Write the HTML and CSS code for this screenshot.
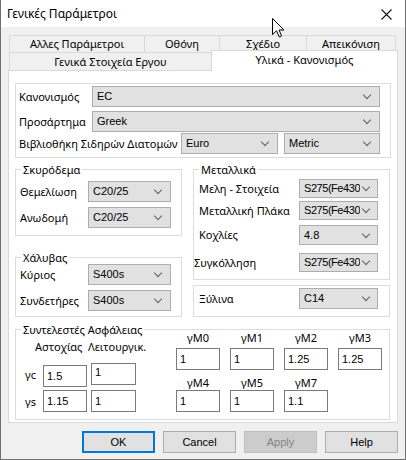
FILE: index.html
```html
<!DOCTYPE html>
<html lang="el">
<head>
<meta charset="utf-8">
<title>Γενικές Παράμετροι</title>
<link rel="stylesheet" href="styles.css">
</head>
<body>
<div class="window">
  <div class="titlebar">
    <span class="title">Γενικές Παράμετροι</span>
    <svg class="close" width="11" height="11" viewBox="0 0 11 11"><path d="M0.5 0.5L10.5 10.5M10.5 0.5L0.5 10.5" stroke="#111" stroke-width="1.1" fill="none"/></svg>
  </div>
  <div class="body">
    <div class="tabs">
      <div class="tabrow back">
        <div class="tab t1">Αλλες Παράμετροι</div>
        <div class="tab t2">Οθόνη</div>
        <div class="tab t3">Σχέδιο</div>
        <div class="tab t4">Απεικόνιση</div>
      </div>
      <div class="tabrow front">
        <div class="tab t5">Γενικά Στοιχεία Εργου</div>
        <div class="tab sel">Υλικά - Κανονισμός</div>
      </div>
    </div>
    <div class="panel">
      <div class="group g-code">
        <div class="row">
          <span class="lbl lw-code">Κανονισμός</span>
          <div class="combo cw-wide"><span class="val">EC</span><span class="chev"></span></div>
        </div>
        <div class="row mt4">
          <span class="lbl lw-code">Προσάρτημα</span>
          <div class="combo cw-wide"><span class="val">Greek</span><span class="chev"></span></div>
        </div>
        <div class="row mt1">
          <span class="lbl lw-lib">Βιβλιοθήκη Σιδηρών Διατομών</span>
          <div class="combo cw-euro"><span class="val">Euro</span><span class="chev"></span></div>
          <div class="combo cw-metric"><span class="val">Metric</span><span class="chev"></span></div>
        </div>
      </div>

      <div class="cols">
        <div class="col col-left">
          <div class="group g-conc">
            <div class="legend lg-left">Σκυρόδεμα</div>
            <div class="row mt5">
              <span class="lbl lw-left">Θεμελίωση</span>
              <div class="combo cw-small"><span class="val">C20/25</span><span class="chev"></span></div>
            </div>
            <div class="row mt5">
              <span class="lbl lw-left">Ανωδομή</span>
              <div class="combo cw-small"><span class="val">C20/25</span><span class="chev"></span></div>
            </div>
          </div>
          <div class="group g-steel">
            <div class="legend lg-left">Χάλυβας</div>
            <div class="row">
              <span class="lbl lw-left">Κύριος</span>
              <div class="combo cw-small"><span class="val">S400s</span><span class="chev"></span></div>
            </div>
            <div class="row mt5">
              <span class="lbl lw-left">Συνδετήρες</span>
              <div class="combo cw-small"><span class="val">S400s</span><span class="chev"></span></div>
            </div>
          </div>
        </div>
        <div class="col col-right">
          <div class="group g-metal">
            <div class="legend lg-right">Μεταλλικά</div>
            <div class="row h19 mt3">
              <span class="lbl lw-right">Μελη - Στοιχεία</span>
              <div class="combo cw-right"><span class="val narrow">S275(Fe430)</span><span class="chev"></span></div>
            </div>
            <div class="row h19 mt3">
              <span class="lbl lw-right">Μεταλλική Πλάκα</span>
              <div class="combo cw-right"><span class="val narrow">S275(Fe430)</span><span class="chev"></span></div>
            </div>
            <div class="row h20 mt5">
              <span class="lbl lw-right">Κοχλίες</span>
              <div class="combo cw-right"><span class="val">4.8</span><span class="chev"></span></div>
            </div>
            <div class="row h19 mt8">
              <span class="lbl lw-right shift-left">Συγκόλληση</span>
              <div class="combo cw-right"><span class="val narrow">S275(Fe430)</span><span class="chev"></span></div>
            </div>
          </div>
          <div class="group g-wood">
            <div class="row">
              <span class="lbl lw-right">Ξύλινα</span>
              <div class="combo cw-right"><span class="val">C14</span><span class="chev"></span></div>
            </div>
          </div>
        </div>
      </div>

      <div class="group g-safety">
        <div class="legend lg-safety">Συντελεστές Ασφάλειας</div>
        <div class="safety">
          <div class="sf-left">
            <div class="hdr">
              <span class="h-ult">Αστοχίας</span>
              <span class="h-serv">Λειτουργικ.</span>
            </div>
            <div class="sf-row mt10">
              <span class="g-lbl">γc</span>
              <div class="edit e-c1 low">1.5</div>
              <div class="edit e-c2 top">1</div>
            </div>
            <div class="sf-row mt5">
              <span class="g-lbl">γs</span>
              <div class="edit e-c1">1.15</div>
              <div class="edit e-c2">1</div>
            </div>
          </div>
          <div class="sf-right">
            <div class="mrow mrow1">
              <div class="mcell"><span class="m-lbl">γM0</span><div class="edit">1</div></div>
              <div class="mcell"><span class="m-lbl">γM1</span><div class="edit">1</div></div>
              <div class="mcell"><span class="m-lbl">γM2</span><div class="edit">1.25</div></div>
              <div class="mcell"><span class="m-lbl">γM3</span><div class="edit">1.25</div></div>
            </div>
            <div class="mrow mrow2">
              <div class="mcell"><span class="m-lbl">γM4</span><div class="edit">1</div></div>
              <div class="mcell"><span class="m-lbl">γM5</span><div class="edit">1</div></div>
              <div class="mcell"><span class="m-lbl">γM7</span><div class="edit">1.1</div></div>
            </div>
          </div>
        </div>
      </div>
    </div>

    <div class="buttons">
      <button class="btn default">OK</button>
      <button class="btn">Cancel</button>
      <button class="btn disabled">Apply</button>
      <button class="btn">Help</button>
    </div>
  </div>
  <svg class="cursor" width="14" height="20" viewBox="0 0 14 20"><path d="M0.5 0.5 V16.5 L4.5 12.8 L7.3 19 L9.6 18 L7 12 H12 Z" fill="#fff" stroke="#000" stroke-width="1" stroke-linejoin="miter"/></svg>
</div>
</body>
</html>
```
FILE: styles.css
```css
html, body {
  margin: 0;
  padding: 0;
  background: #f0f0f0;
}

.window {
  position: relative;
  width: 406px;
  height: 460px;
  box-sizing: border-box;
  border: 1px solid #707070;
  border-top: none;
  background: #f0f0f0;
  font-family: "Noto Sans", sans-serif;
  font-size: 11px;
  color: #000;
  overflow: hidden;
}

/* title bar */
.titlebar {
  height: 27px;
  background: #fff;
  display: flex;
  align-items: center;
  justify-content: space-between;
  padding: 0 13px 0 6px;
}
.title {
  font-size: 12px;
  line-height: 14px;
}
.close {
  display: block;
  margin-top: 1px;
}

.body {
  padding: 8px 7px 0 7px;
}

/* tabs */
.tabrow {
  display: flex;
  margin-left: 1px;
}
.back { height: 17px; }
.front { height: 18px; }
.tab {
  box-sizing: border-box;
  border: 1px solid #d9d9d9;
  border-bottom: none;
  display: flex;
  align-items: center;
  justify-content: center;
  line-height: 14px;
  background: #f0f0f0;
  margin-left: -1px;
  font-size: 11px;
}
.tab:first-child { margin-left: 0; }
.t1 { width: 136px; }
.t2 { width: 76px; }
.t3 { width: 88px; }
.t4 { width: 90px; }
.t5 { width: 203px; }
.tab.sel {
  width: 187px;
  height: 21px;
  margin-top: -2px;
  margin-bottom: -1px;
  background: #fff;
  position: relative;
  z-index: 1;
  align-items: flex-start;
  padding-top: 2px;
}

/* panel */
.panel {
  box-sizing: border-box;
  width: 390px;
  height: 353px;
  border: 1px solid #d9d9d9;
  background: #fff;
  padding: 12px 0 0 6px;
}

.group {
  box-sizing: border-box;
  border: 1px solid #dcdcdc;
}
.legend {
  width: fit-content;
  height: 12px;
  line-height: 12px;
  padding: 0 2px;
  background: #fff;
  margin-top: -6px;
}
.lg-left { margin-left: 1px; }
.lg-right { margin-left: 0; }
.lg-safety { margin-left: 5px; margin-bottom: -6px; position: relative; }

.row {
  display: flex;
  align-items: center;
  height: 21px;
}
.h19 { height: 19px; }
.h20 { height: 20px; }
.mt1 { margin-top: 1px; }
.mt3 { margin-top: 3px; }
.mt4 { margin-top: 4px; }
.mt5 { margin-top: 5px; }
.mt8 { margin-top: 8px; }
.mt10 { margin-top: 10px; }

.lbl {
  white-space: nowrap;
  line-height: 14px;
}
.lw-code { width: 73px; }
.lw-lib { width: 162px; }
.lw-left { width: 68px; }
.lw-right { width: 100px; }
.shift-left { margin-left: -5px; width: 105px; }

/* combo boxes */
.combo {
  box-sizing: border-box;
  height: 100%;
  display: flex;
  align-items: center;
  background: #e1e1e1;
  border: 1px solid #adadad;
  padding: 0 0 0 4px;
  font-family: "Liberation Sans", Arial, sans-serif;
  font-size: 11px;
}
.val {
  flex: 1;
  overflow: hidden;
  white-space: nowrap;
  line-height: 13px;
}
.val.narrow {
  letter-spacing: -0.45px;
}
.chev {
  flex: none;
  width: 5px;
  height: 5px;
  border-right: 1px solid #606060;
  border-bottom: 1px solid #606060;
  transform: rotate(45deg);
  margin: -3px 9px 0 6px;
}
.cw-right .chev {
  margin: -3px 8px 0 3px;
}
.cw-wide { width: 288px; }
.cw-euro { width: 97px; }
.cw-metric { width: 96px; margin-left: 6px; }
.cw-small { width: 83px; }
.cw-right { width: 79px; }

/* group boxes */
.g-code {
  width: 376px;
  height: 75px;
  padding: 2px 0 0 3px;
}
.cols {
  display: flex;
  gap: 11px;
  margin-top: 11px;
}
.col-left { width: 167px; }
.col-right { width: 197px; }
.g-conc {
  height: 67px;
  padding-left: 4px;
}
.g-steel {
  margin-top: 21px;
  height: 60px;
  padding-left: 4px;
}
.g-metal {
  height: 111px;
  padding-left: 5px;
}
.g-wood {
  margin-top: 5px;
  height: 32px;
  padding: 2px 0 0 5px;
}

/* safety factors */
.g-safety {
  margin-top: 12px;
  width: 375px;
  height: 91px;
}
.safety {
  display: flex;
}
.sf-left {
  width: 160px;
}
.hdr {
  display: flex;
  margin-top: 11px;
  height: 12px;
  line-height: 12px;
}
.h-ult { margin-left: 19px; width: 53px; }
.sf-row {
  display: flex;
  height: 22px;
}
.g-lbl {
  width: 27px;
  box-sizing: border-box;
  padding-left: 9px;
  line-height: 22px;
  padding-top: 1px;
}
.edit {
  box-sizing: border-box;
  height: 22px;
  border: 1px solid #7a7a7a;
  background: #fff;
  display: flex;
  align-items: center;
  padding-left: 3px;
  font-family: "Liberation Sans", Arial, sans-serif;
  font-size: 11px;
}
.e-c1 { width: 44px; }
.e-c2 { width: 45px; margin-left: 4px; }
.edit.low { margin-top: 2px; }
.edit.top { align-items: flex-start; padding-top: 2px; }

.mrow {
  display: grid;
  grid-template-columns: repeat(4, 44px);
  column-gap: 10px;
}
.mrow1 { margin-top: 2px; }
.mrow2 { margin-top: 7px; }
.mcell {
  display: flex;
  flex-direction: column;
}
.m-lbl {
  height: 12px;
  line-height: 12px;
  text-align: center;
}
.mrow1 .m-lbl { margin-bottom: 4px; }
.mrow2 .m-lbl { margin-bottom: 1px; }
.mcell .edit { width: 44px; }

/* buttons */
.buttons {
  display: flex;
  justify-content: flex-end;
  gap: 8px;
  margin-top: 8px;
}
.btn {
  box-sizing: border-box;
  width: 73px;
  height: 22px;
  margin: 0;
  padding: 0;
  background: #e1e1e1;
  border: 1px solid #adadad;
  font-family: "Liberation Sans", Arial, sans-serif;
  font-size: 11px;
  color: #000;
}
.btn.default {
  border: 2px solid #0078d7;
}
.btn.disabled {
  background: #cccccc;
  border-color: #bfbfbf;
  color: #838383;
}

.cursor {
  position: absolute;
  left: 271px;
  top: 18px;
  display: block;
}
```
